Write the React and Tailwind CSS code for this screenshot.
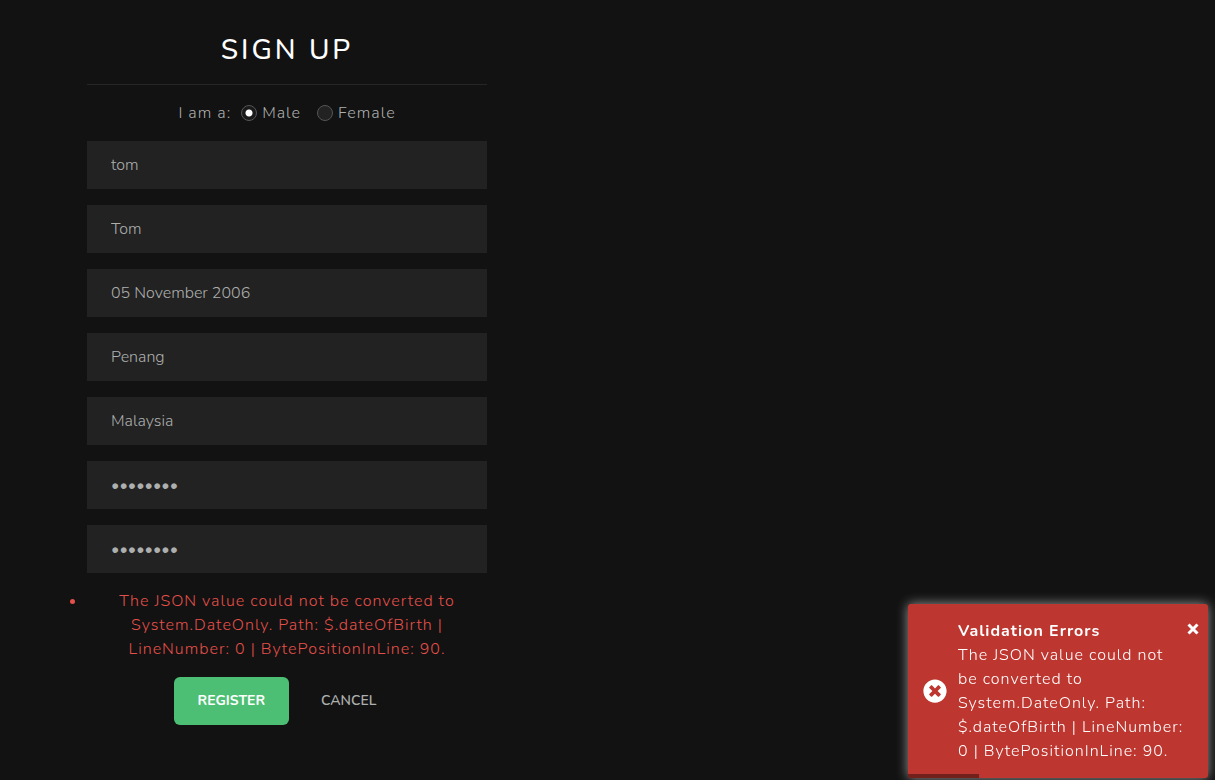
import { useState } from "react";
import { FaTimesCircle } from "react-icons/fa";

const fields = [
  { name: "username", label: "Username", type: "text", value: "tom" },
  { name: "knownAs", label: "Known as", type: "text", value: "Tom" },
  { name: "dateOfBirth", label: "Date of birth", type: "text", value: "05 November 2006" },
  { name: "city", label: "City", type: "text", value: "Penang" },
  { name: "country", label: "Country", type: "text", value: "Malaysia" },
  { name: "password", label: "Password", type: "password", value: "password" },
  { name: "confirmPassword", label: "Confirm password", type: "password", value: "password" },
];

const errorText =
  "The JSON value could not be converted to System.DateOnly. Path: $.dateOfBirth | LineNumber: 0 | BytePositionInLine: 90.";

function GenderRadio({ value, label, checked, onChange }) {
  return (
    <label className="flex items-center gap-[5px]">
      <input
        type="radio"
        name="gender"
        value={value}
        checked={checked}
        onChange={onChange}
        className="size-4 appearance-none rounded-full border border-[#555] bg-[#222] checked:bg-[radial-gradient(circle,#fff_0_3px,#1a1a1a_4px)]"
      />
      {label}
    </label>
  );
}

function SignUpForm() {
  const [gender, setGender] = useState("male");
  return (
    <form className="w-full max-w-[400px] text-center" onSubmit={(e) => e.preventDefault()}>
      <h2 className="text-[28px] leading-9 font-medium tracking-[3px] text-white">SIGN UP</h2>
      <hr className="my-4 border-[#262626]" />
      <div className="flex items-center justify-center gap-4">
        <div className="flex items-center gap-2.5">
          <span>I am a:</span>
          <GenderRadio value="male" label="Male" checked={gender === "male"} onChange={() => setGender("male")} />
        </div>
        <GenderRadio value="female" label="Female" checked={gender === "female"} onChange={() => setGender("female")} />
      </div>
      <div className="mt-4 flex flex-col gap-4">
        {fields.map((field) => (
          <input
            key={field.name}
            name={field.name}
            type={field.type}
            aria-label={field.label}
            defaultValue={field.value}
            className="h-12 w-full bg-[#222] px-6 tracking-normal text-[#adafae] outline-none"
          />
        ))}
      </div>
      <ul className="mt-4 list-disc text-[#e4504a]">
        <li>{errorText}</li>
      </ul>
      <div className="mt-4 flex justify-center gap-2 text-sm font-semibold tracking-normal">
        <button type="submit" className="h-12 rounded-md bg-[#4dbf75] px-6 font-bold text-white">REGISTER</button>
        <button type="button" className="h-12 rounded-md px-6">CANCEL</button>
      </div>
    </form>
  );
}

function Toast() {
  return (
    <div
      role="alert"
      className="fixed right-[7px] bottom-0.5 flex w-[300px] items-center gap-[11px] overflow-hidden rounded-[3px] bg-[#bd362f] py-[15px] pr-[22px] pl-[15px] text-white shadow-[0_0_12px_#999]"
    >
      <FaTimesCircle className="size-6 shrink-0" aria-hidden="true" />
      <div className="min-w-0">
        <div className="font-bold">Validation Errors</div>
        <div>{errorText}</div>
      </div>
      <button type="button" aria-label="Close" className="absolute top-[19px] right-[9px]">
        <svg viewBox="0 0 12 12" className="size-3 stroke-white" strokeWidth="3" fill="none">
          <path d="M1.5 1.5 10.5 10.5M10.5 1.5 1.5 10.5" />
        </svg>
      </button>
      <div className="absolute bottom-0 left-0 h-1 w-[71px] bg-black/40" />
    </div>
  );
}

export default function App() {
  return (
    <div className="min-h-screen bg-[#121212] px-[87px] pt-8 font-['Nunito',Lato,sans-serif] text-base font-light tracking-[1px] text-[#adafae]">
      <SignUpForm />
      <Toast />
    </div>
  );
}
